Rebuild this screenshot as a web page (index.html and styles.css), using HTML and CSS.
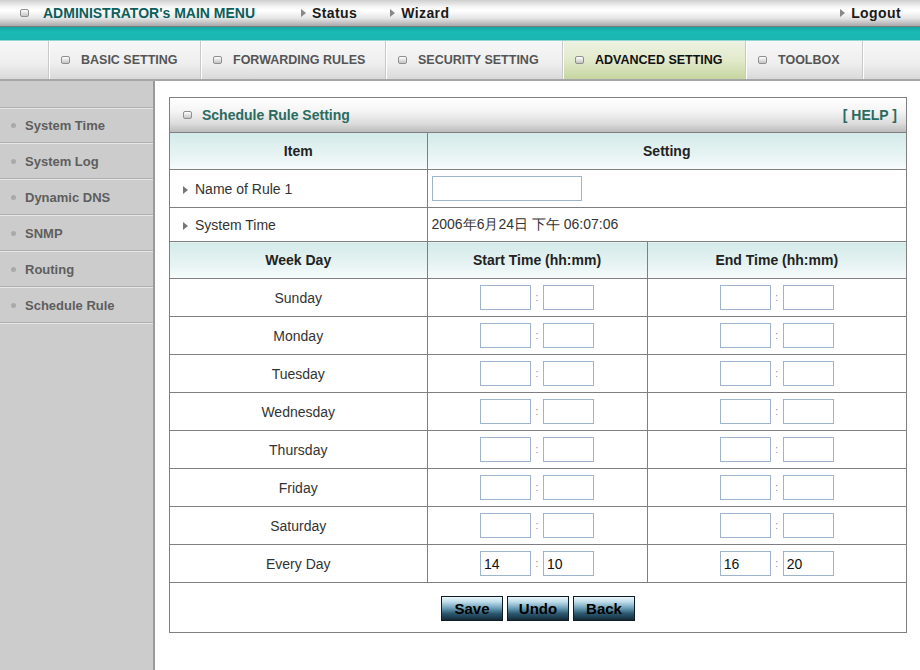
FILE: index.html
```html
<!DOCTYPE html>
<html>
<head>
<meta charset="utf-8">
<title>Schedule Rule Setting</title>
<link rel="stylesheet" href="styles.css">
</head>
<body>
<div class="topbar">
  <span class="sq"></span>
  <span class="menu-title">ADMINISTRATOR's MAIN MENU</span>
  <a class="toplink first"><span class="tri"></span>Status</a>
  <a class="toplink"><span class="tri"></span>Wizard</a>
  <a class="toplink logout"><span class="tri"></span>Logout</a>
</div>
<div class="band"></div>
<div class="tabs">
  <div class="tab-lead"></div>
  <div class="tab w1"><span class="sq"></span>BASIC SETTING</div>
  <div class="tab w2"><span class="sq"></span>FORWARDING RULES</div>
  <div class="tab w3"><span class="sq"></span>SECURITY SETTING</div>
  <div class="tab w4 active"><span class="sq"></span>ADVANCED SETTING</div>
  <div class="tab w5"><span class="sq"></span>TOOLBOX</div>
  <div class="tab rest"></div>
</div>
<div class="main">
  <div class="sidebar">
    <div class="side-top"></div>
    <div class="side-item"><span class="dot"></span>System Time</div>
    <div class="side-item"><span class="dot"></span>System Log</div>
    <div class="side-item"><span class="dot"></span>Dynamic DNS</div>
    <div class="side-item"><span class="dot"></span>SNMP</div>
    <div class="side-item"><span class="dot"></span>Routing</div>
    <div class="side-item"><span class="dot"></span>Schedule Rule</div>
  </div>
  <div class="content">
    <div class="panel">
      <div class="panel-title">
        <span class="title-left"><span class="sq"></span>Schedule Rule Setting</span>
        <span class="help">[ HELP ]</span>
      </div>
      <table class="grid">
        <colgroup><col class="c1"><col class="c2"><col class="c3"></colgroup>
        <tr class="head"><th>Item</th><th colspan="2">Setting</th></tr>
        <tr class="r-name"><td class="label"><span class="tri"></span>Name of Rule 1</td><td colspan="2" class="val"><input class="name-input" type="text"></td></tr>
        <tr class="r-time"><td class="label"><span class="tri"></span>System Time</td><td colspan="2" class="val">2006年6月24日 下午 06:07:06</td></tr>
        <tr class="head"><th>Week Day</th><th>Start Time (hh:mm)</th><th>End Time (hh:mm)</th></tr>
        <tr class="day"><td>Sunday</td><td><span class="hm"><input type="text"><span class="colon">:</span><input type="text"></span></td><td><span class="hm"><input type="text"><span class="colon">:</span><input type="text"></span></td></tr>
        <tr class="day"><td>Monday</td><td><span class="hm"><input type="text"><span class="colon">:</span><input type="text"></span></td><td><span class="hm"><input type="text"><span class="colon">:</span><input type="text"></span></td></tr>
        <tr class="day"><td>Tuesday</td><td><span class="hm"><input type="text"><span class="colon">:</span><input type="text"></span></td><td><span class="hm"><input type="text"><span class="colon">:</span><input type="text"></span></td></tr>
        <tr class="day"><td>Wednesday</td><td><span class="hm"><input type="text"><span class="colon">:</span><input type="text"></span></td><td><span class="hm"><input type="text"><span class="colon">:</span><input type="text"></span></td></tr>
        <tr class="day"><td>Thursday</td><td><span class="hm"><input type="text"><span class="colon">:</span><input type="text"></span></td><td><span class="hm"><input type="text"><span class="colon">:</span><input type="text"></span></td></tr>
        <tr class="day"><td>Friday</td><td><span class="hm"><input type="text"><span class="colon">:</span><input type="text"></span></td><td><span class="hm"><input type="text"><span class="colon">:</span><input type="text"></span></td></tr>
        <tr class="day"><td>Saturday</td><td><span class="hm"><input type="text"><span class="colon">:</span><input type="text"></span></td><td><span class="hm"><input type="text"><span class="colon">:</span><input type="text"></span></td></tr>
        <tr class="day"><td>Every Day</td><td><span class="hm"><input type="text" value="14"><span class="colon">:</span><input type="text" value="10"></span></td><td><span class="hm"><input type="text" value="16"><span class="colon">:</span><input type="text" value="20"></span></td></tr>
        <tr class="btn-row"><td colspan="3"><div class="btns"><button>Save</button><button>Undo</button><button>Back</button></div></td></tr>
      </table>
    </div>
  </div>
</div>
</body>
</html>
```
FILE: styles.css
```css
html, body {
  margin: 0;
  padding: 0;
  background: #ffffff;
  font-family: "Liberation Sans", Arial, sans-serif;
  width: 920px;
  height: 670px;
  overflow: hidden;
}

.sq {
  display: inline-block;
  width: 7px;
  height: 6px;
  border: 1px solid #8f8f8f;
  border-radius: 2px;
  background: linear-gradient(#ffffff, #c4c4c4);
  box-sizing: content-box;
}

.tri {
  display: inline-block;
  width: 0;
  height: 0;
  border-left: 5px solid #7a7a7a;
  border-top: 4px solid transparent;
  border-bottom: 4px solid transparent;
  margin-right: 7px;
}

/* top bar */
.topbar {
  height: 26px;
  display: flex;
  align-items: center;
  padding-left: 20px;
  background: linear-gradient(#cfcfcf 0%, #f4f4f4 25%, #ffffff 40%, #e6e6e6 70%, #a9a9a9 100%);
  border-bottom: 1px solid #7d7d7d;
  box-sizing: content-box;
}
.topbar .sq { margin-right: 14px; }
.menu-title {
  font-weight: bold;
  font-size: 14px;
  color: #0b5e5b;
}
.toplink {
  display: flex;
  align-items: center;
  font-weight: bold;
  font-size: 14px;
  letter-spacing: 0.4px;
  color: #1a1a1a;
  margin-left: 33px;
}
.toplink.first { margin-left: 46px; }
.toplink .tri { margin-right: 6px; border-left-color: #888; }
.toplink.logout { margin-left: auto; margin-right: 19px; }

.band {
  height: 13px;
  background: linear-gradient(#12a7a2, #1cbab5 40%, #1bb5b0);
  border-bottom: 1px solid #8fd6d2;
}

/* tabs */
.tabs {
  display: flex;
  height: 38px;
  background: linear-gradient(#f7f7f7 0%, #eeeeee 60%, #d9d9d9 100%);
  border-bottom: 2px solid #a6a6a6;
}
.tab-lead { width: 48px; }
.tab {
  display: flex;
  align-items: center;
  box-sizing: border-box;
  border-left: 1px solid #c8c8c8;
  box-shadow: inset 1px 0 0 #ffffff;
  padding-left: 12px;
  font-weight: bold;
  font-size: 12.5px;
  color: #555555;
}
.tab .sq { margin-right: 11px; }
.w1 { width: 152px; }
.w2 { width: 185px; }
.w3 { width: 177px; }
.w4 { width: 183px; }
.w5 { width: 117px; }
.rest { flex: 1; }
.tab.active {
  background: linear-gradient(#edf2e2 0%, #e2eacb 50%, #c6d5a0 100%);
  color: #111111;
}

/* main */
.main {
  display: flex;
  height: 590px;
}
.sidebar {
  width: 153px;
  background: #cccccc;
  border-right: 2px solid #9a9a9a;
  flex-shrink: 0;
}
.side-top {
  height: 26px;
  border-bottom: 1px solid #b0b0b0;
  box-shadow: 0 1px 0 #e6e6e6;
}
.side-item {
  height: 34px;
  display: flex;
  align-items: center;
  padding-left: 11px;
  font-weight: bold;
  font-size: 13px;
  color: #5e5e5e;
  border-bottom: 1px solid #b0b0b0;
  box-shadow: 0 1px 0 #e6e6e6;
  margin-bottom: 1px;
}
.dot {
  display: inline-block;
  width: 5px;
  height: 5px;
  border-radius: 50%;
  background: #a9a9a9;
  margin-right: 9px;
}

.content {
  flex: 1;
  padding: 16px 0 0 14px;
}
.panel {
  width: 738px;
  box-sizing: border-box;
  border: 1px solid #7f7f7f;
}
.panel-title {
  height: 34px;
  display: flex;
  align-items: center;
  justify-content: space-between;
  padding: 0 9px 0 13px;
  background: linear-gradient(#ffffff 0%, #f4f4f4 40%, #dcdcdc 75%, #bcbcbc 100%);
  border-bottom: 1px solid #7f7f7f;
  font-weight: bold;
  font-size: 14px;
  color: #2a6b5f;
}
.title-left { display: flex; align-items: center; }
.title-left .sq { margin-right: 10px; }
.help { color: #2a6b5f; }

.grid {
  width: 100%;
  border-collapse: collapse;
  table-layout: fixed;
}
.c1 { width: 257px; }
.c2 { width: 220px; }
.c3 { width: 259px; }
.grid td, .grid th {
  border: 1px solid #7f7f7f;
  padding: 0;
  font-size: 14px;
}
.grid tr:first-child th { border-top: none; }
.grid td:first-child, .grid th:first-child { border-left: none; }
.grid td:last-child, .grid th:last-child { border-right: none; }
.grid tr:last-child td { border-bottom: none; }

.head th {
  height: 36px;
  background: linear-gradient(#d3eae9 0%, #e6f3f3 60%, #f7fbfb 100%);
  font-weight: bold;
  color: #222222;
  font-size: 14px;
}
.label {
  color: #333333;
  padding-left: 13px !important;
}
.label .tri { border-left-color: #777; }
.r-name td { height: 37px; }
.r-time td { height: 33px; }
.val {
  color: #333333;
  padding-left: 4px !important;
}
.name-input {
  width: 150px;
  height: 25px;
  box-sizing: border-box;
  border: 1px solid #9eb4cc;
  margin: 0;
  display: block;
}

.day td {
  height: 37px;
  text-align: center;
  color: #333333;
}
.hm {
  display: inline-flex;
  align-items: center;
}
.hm input {
  width: 51px;
  height: 25px;
  box-sizing: border-box;
  border: 1px solid #9eb4cc;
  margin: 0;
  padding: 0 3px;
  font-family: "Liberation Sans Narrow", "Liberation Sans", sans-serif;
  font-size: 14px;
  color: #111;
  background: #fff;
}
.colon {
  width: 12px;
  text-align: center;
  font-size: 10px;
  color: #888888;
}

.btn-row td { height: 49px; }
.btns {
  display: flex;
  justify-content: center;
  gap: 4px;
  padding-top: 1px;
}
.btns button {
  width: 62px;
  height: 25px;
  padding: 0;
  border: 1px solid #0e1d26;
  background: linear-gradient(#eef7fb 0%, #bcdbe8 22%, #6d9fb8 48%, #2b5870 72%, #132a38 100%);
  font-family: "Liberation Sans Narrow", "Liberation Sans", sans-serif;
  font-weight: bold;
  font-size: 15px;
  color: #000000;
}
```
